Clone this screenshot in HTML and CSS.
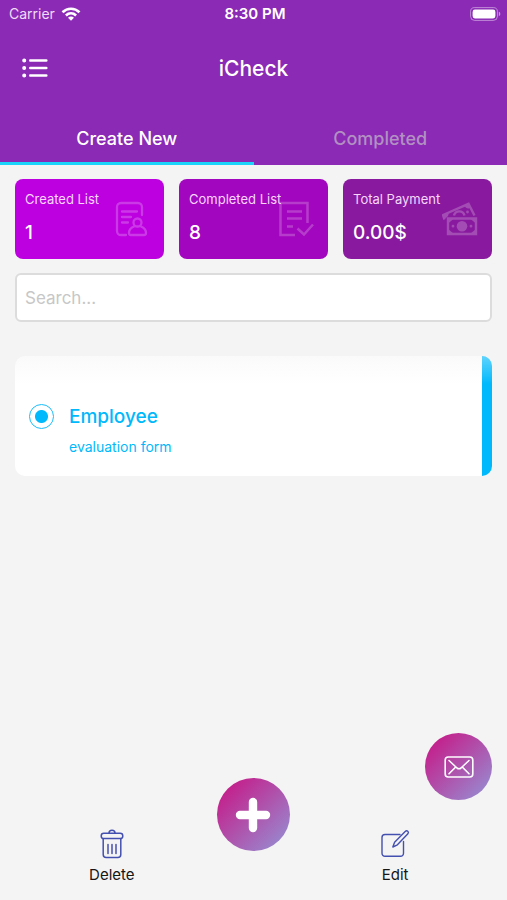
FILE: index.html
```html
<!DOCTYPE html>
<html lang="en">
<head>
<meta charset="utf-8">
<meta name="viewport" content="width=device-width, initial-scale=1">
<title>iCheck</title>
<link rel="stylesheet" href="styles.css">
</head>
<body>
<header class="header">
  <div class="status">
    <span class="carrier">Carrier
      <svg width="20" height="14" viewBox="0 0 20 14" fill="none" stroke="#fff" stroke-width="2.600" aria-hidden="true"><path d="M1.500 5.200c4.900-4.700 12.100-4.700 17 0M4.900 8.500c3-2.800 7.200-2.800 10.200 0"/><path d="M10 13.700 7 10.700c1.700-1.500 4.300-1.500 6 0z" fill="#fff" stroke="none"/></svg>
    </span>
    <span class="clock">8:30 PM</span>
    <svg class="battery" width="31" height="14" viewBox="0 0 31 14" aria-hidden="true"><rect x=".6" y=".6" width="26.800" height="12.800" rx="4" fill="none" stroke="#fff" stroke-opacity=".45"/><rect x="2.600" y="2.600" width="22.800" height="8.800" rx="2.300" fill="#fff"/><path d="M28.800 4.800c2 .6 2 3.800 0 4.400z" fill="#fff" fill-opacity=".5"/></svg>
  </div>
  <div class="titlebar">
    <button class="menu" type="button" aria-label="Menu">
      <svg width="26" height="20" viewBox="0 0 26 20" fill="none" stroke="#fff" stroke-linecap="round" aria-hidden="true"><path stroke-width="2.600" d="M8.300 2.500h16M8.300 10h16M8.300 17.500h16"/><path stroke-width="4" d="M2.200 2.500h.01M2.200 10h.01M2.200 17.500h.01"/></svg>
    </button>
    <h1 class="title">iCheck</h1>
  </div>
  <nav class="tabs">
    <a class="tab tab-active" href="#new">Create New</a>
    <a class="tab" href="#completed">Completed</a>
  </nav>
</header>

<main class="content">
  <section class="stats">
    <article class="stat stat-created">
      <span class="stat-label">Created List</span>
      <strong class="stat-value">1</strong>
      <svg class="stat-icon" width="36" height="36" viewBox="0 0 36 36" fill="none" stroke="#fff" stroke-width="2.300" stroke-linecap="round" stroke-linejoin="round" aria-hidden="true"><path d="M12 34H7a4 4 0 0 1-4-4V6a4 4 0 0 1 4-4h17a4 4 0 0 1 4 4v8M8 10.500h15M8 16h9M8 21.500h6"/><circle cx="23.500" cy="21.500" r="4"/><path d="M20 25.500c-4 1.500-5 4-5 6.500 0 1.300.8 2 2 2h13c1.200 0 2-.7 2-2 0-2.500-1-5-5-6.500"/></svg>
    </article>
    <article class="stat stat-completed">
      <span class="stat-label">Completed List</span>
      <strong class="stat-value">8</strong>
      <svg class="stat-icon" width="36" height="36" viewBox="0 0 36 36" fill="none" stroke="#fff" stroke-width="2.500" aria-hidden="true"><path d="M17 34H2.500V2h27v20M9 10.500h15M9 17.500h15M9 25.500h6M19.500 27.500l6.500 6L35 23.500"/></svg>
    </article>
    <article class="stat stat-payment">
      <span class="stat-label">Total Payment</span>
      <strong class="stat-value">0.00$</strong>
      <svg class="stat-icon" width="36" height="36" viewBox="0 0 36 36" fill="none" stroke="#fff" stroke-width="2.400" aria-hidden="true"><path d="M2.500 18.500 1 14 26.500 2.800 32.500 14.500"/><path d="M12 14.500c1.500-5.500 9-5.500 10.500 0" /><path d="M22.500 4.500 26.500 2.800l2 4c-2.500 1.500-5 .2-6-2.300zM1 14l5.500-2.400c.5 3-1 4.900-4 5.900z" fill="#fff" stroke="none"/><path d="M6 17.500h28V33H6z"/><path d="M6 17.500h6l-6 5zM34 17.500h-6l6 5zM6 33h6l-6-5zM34 33h-6l6-5z" fill="#fff" stroke="none"/><circle cx="20" cy="25.200" r="5.300" fill="#fff" stroke="none"/><path stroke-linecap="round" stroke-width="2.800" d="M11 25.200h.01M29 25.200h.01M25.500 11h.01"/></svg>
    </article>
  </section>

  <input class="search" type="search" placeholder="Search..." aria-label="Search">

  <label class="item">
    <input class="item-radio" type="radio" name="form" checked>
    <span class="item-text">
      <span class="item-title">Employee</span>
      <span class="item-sub">evaluation form</span>
    </span>
  </label>
</main>

<footer class="actions">
  <button class="action" type="button">
    <svg width="30" height="30" viewBox="0 0 30 30" fill="none" stroke="#4450b0" stroke-width="1.500" stroke-linecap="round" stroke-linejoin="round" aria-hidden="true"><rect x="4.200" y="4.300" width="21.600" height="5.200" rx="2.600"/><path d="M12 4.300c0-4 6-4 6 0M6.200 9.700V25.500a3 3 0 0 0 3 3h11.600a3 3 0 0 0 3-3V9.700M11 15.500v9M15 15.500v9M19 15.500v9"/></svg>
    Delete
  </button>
  <button class="round add" type="button" aria-label="Add">
    <svg width="36" height="36" viewBox="0 0 36 36" stroke="#fff" stroke-width="8.400" stroke-linecap="round" aria-hidden="true"><path d="M18 5v26M5 18h26"/></svg>
  </button>
  <button class="action" type="button">
    <svg width="30" height="30" viewBox="0 0 30 30" fill="none" stroke="#4450b0" stroke-width="1.400" stroke-linecap="round" stroke-linejoin="round" aria-hidden="true"><path d="M20 5.500H5A3 3 0 0 0 2 8.500v15.800a3 3 0 0 0 3 3h15.500a3 3 0 0 0 3-3V12.500"/><path d="M12.800 18l1.800-4.800L25.200 2.500c1.800-1.600 4.200.3 2.700 2.300L17.400 15.800z"/></svg>
    Edit
  </button>
</footer>

<button class="round mail" type="button" aria-label="Messages">
  <svg width="30" height="22" viewBox="0 0 30 22" fill="none" stroke="#fff" stroke-width="1.600" stroke-linecap="round" stroke-linejoin="round" aria-hidden="true"><rect x="1.200" y="1" width="27.600" height="20" rx="3"/><path d="M5 4.500 13 12q2 1.500 4 0L25 4.500M5 17.800l6.500-6.500M25 17.800l-6.500-6.500"/></svg>
</button>
</body>
</html>
```
FILE: styles.css
```css
* { box-sizing: border-box; }

body {
  margin: 0;
  min-height: 100vh;
  display: flex;
  flex-direction: column;
  background: #f4f4f4;
  font-family: Inter, "Liberation Sans", sans-serif;
}

button {
  padding: 0;
  border: 0;
  background: none;
  font: inherit;
  cursor: pointer;
}

svg { display: block; flex: none; }

.header {
  background: #8a2ab5;
  color: #fff;
}

.status {
  display: grid;
  grid-template-columns: 1fr auto 1fr;
  align-items: center;
  height: 27px;
  padding: 0 6px 0 9px;
  font-size: 14px;
}

.carrier {
  display: flex;
  align-items: center;
  gap: 6px;
  color: #f0dcf7;
}

.clock {
  font-size: 15px;
  font-weight: 600;
}

.battery { justify-self: end; }

.titlebar {
  display: grid;
  grid-template-columns: 1fr auto 1fr;
  align-items: center;
  height: 82px;
  padding: 0 22px;
}

.menu { justify-self: start; }

.title {
  margin: 0;
  font-size: 21px;
  font-weight: 500;
}

.tabs { display: flex; }

.tab {
  flex: 1;
  height: 56px;
  padding-top: 3px;
  border-bottom: 3px solid transparent;
  color: #b290c1;
  font-size: 18px;
  font-weight: 500;
  line-height: 54px;
  text-align: center;
  text-decoration: none;
}

.tab-active {
  border-color: #1cd3fa;
  color: #fff;
}

.content {
  display: flex;
  flex: 1;
  flex-direction: column;
  padding: 14px 15px 0;
}

.stats {
  display: grid;
  grid-template-columns: repeat(3, 1fr);
  gap: 15px;
}

.stat {
  position: relative;
  display: flex;
  flex-direction: column;
  gap: 12px;
  height: 80px;
  padding: 10px 0 0 10px;
  border-radius: 8px;
  color: #fff;
  white-space: nowrap;
}

.stat-created { background: #bd00e0; }
.stat-completed { background: #a206be; }
.stat-payment { background: #891a9f; }

.stat-label {
  color: #f6d6fa;
  font-size: 13px;
  line-height: 20px;
}

.stat-value {
  font-size: 19px;
  font-weight: 500;
  line-height: 24px;
}

.stat-icon {
  position: absolute;
  top: 22px;
  right: 14px;
  opacity: 0.22;
}

.search {
  height: 49px;
  margin-top: 14px;
  padding: 0 8px;
  border: 2px solid #dcdcdc;
  border-radius: 6px;
  background: #fff;
  font: inherit;
  font-size: 17px;
}

.search::placeholder { color: #c7c7c7; }

.item {
  position: relative;
  display: flex;
  align-items: flex-start;
  gap: 15px;
  height: 120px;
  margin-top: 34px;
  padding: 47px 14px 0;
  border-right: 10px solid #00b9fc;
  border-radius: 10px;
  background: linear-gradient(#fafafa, #fff 28px);
  color: #00b9fc;
}

.item::after {
  content: "";
  position: absolute;
  top: 0;
  right: -10px;
  width: 10px;
  height: 28px;
  border-top-right-radius: 10px;
  background: linear-gradient(#ffffff60, #ffffff00);
}

.item-radio {
  appearance: none;
  width: 25px;
  height: 25px;
  margin: 1px 0 0;
  border: 1px solid #1abdfb;
  border-radius: 50%;
  background: radial-gradient(circle, #00b9fc 6px, #fff 7px);
}

.item-text {
  display: flex;
  flex-direction: column;
  gap: 6px;
}

.item-title {
  font-size: 19px;
  font-weight: 500;
  line-height: 28px;
}

.item-sub {
  font-size: 14px;
  line-height: 20px;
}

.actions {
  display: grid;
  grid-template-columns: repeat(3, 1fr);
  justify-items: center;
  align-items: end;
  padding: 0 41px 15px;
}

.action {
  display: flex;
  flex-direction: column;
  align-items: center;
  gap: 6px;
  color: #161616;
  font-size: 15px;
  line-height: 20px;
}

.round {
  display: grid;
  place-items: center;
  border-radius: 50%;
  background: linear-gradient(135deg, #c41f8b 12%, #9a84cc 88%);
}

.add {
  width: 73px;
  height: 73px;
  margin-bottom: 34px;
}

.mail {
  position: fixed;
  right: 15px;
  bottom: 100px;
  width: 67px;
  height: 67px;
}
```
